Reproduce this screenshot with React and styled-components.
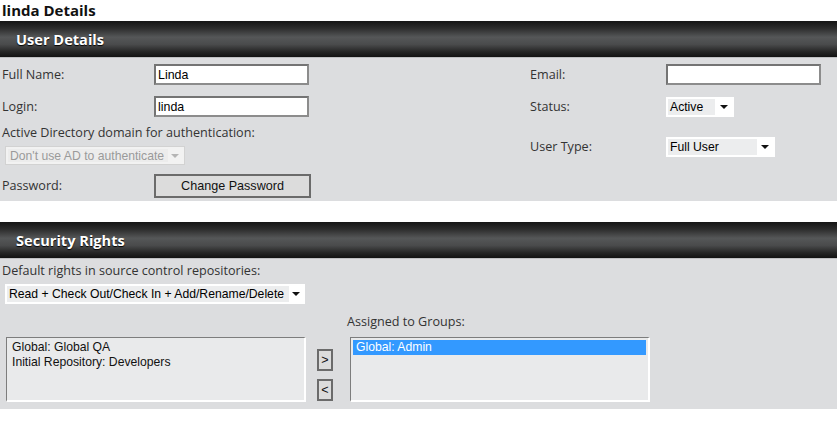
import React from 'react';
import styled, { createGlobalStyle } from 'styled-components';

/* global */

const GlobalStyle = createGlobalStyle`
    body {
        margin: 0;
        background: #ffffff;
        font-family: "Open Sans", "DejaVu Sans", sans-serif;
        color: #333;
    }
`;

/* layout */

const Page = styled.div`
    width: 837px;
    height: 425px;
    overflow: hidden;
`;

const PageTitle = styled.h1`
    margin: 0;
    padding: 1px 0 0 2px;
    height: 20px;
    font-size: 15px;
    line-height: 19px;
    font-weight: 700;
    color: #111;
`;

const SectionHeader = styled.div`
    height: 36px;
    display: flex;
    align-items: center;
    padding-left: 16px;
    background: linear-gradient(#151515 0%, #2c2c2c 20%, #555758 45%, #4a4b4c 65%, #262626 85%, #121212 100%);
    border-bottom: 1px solid #bfc0c2;
    color: #fff;
    font-size: 14.6px;
    font-weight: 700;
    text-shadow: 0 1px 1px #000;
`;

const Panel = styled.div`
    background: #dcdddf;
    padding: ${props => props.pad || '0'};
`;

const Gap = styled.div`
    height: ${props => props.h}px;
`;

const TwoCols = styled.div`
    display: flex;
`;

const Column = styled.div`
    display: flex;
    flex-direction: column;
    width: ${props => props.w}px;
    padding-top: 6px;
`;

const Row = styled.div`
    display: flex;
    align-items: center;
    height: ${props => props.h || 21}px;
    margin-top: ${props => props.mt || 0}px;
    margin-left: ${props => props.ml || 0}px;
`;

const Label = styled.span`
    display: block;
    width: ${props => props.w ? props.w + 'px' : 'auto'};
    flex-shrink: 0;
    font-size: 12.6px;
    line-height: 16px;
    color: #333;
    margin-top: ${props => props.mt || 0}px;
    margin-left: ${props => props.ml || 0}px;
`;

/* controls */

const TextInput = styled.input`
    box-sizing: border-box;
    width: ${props => props.w}px;
    height: 21px;
    border: 2px solid #747474;
    border-bottom-color: #8c8c8c;
    border-right-color: #8c8c8c;
    background: #fff;
    padding: 0 2px;
    font-family: "Liberation Sans", Arial, sans-serif;
    font-size: 12.4px;
    color: #000;
    outline: none;
`;

const PushButton = styled.button`
    box-sizing: border-box;
    width: ${props => props.w}px;
    height: ${props => props.h}px;
    padding: 0;
    border: 2px solid #6b6b6b;
    background: #dcdcdc;
    font-family: "Liberation Sans", Arial, sans-serif;
    font-size: 12.6px;
    color: #111;
    display: flex;
    align-items: center;
    justify-content: center;
`;

const SelectBox = styled.div`
    box-sizing: border-box;
    display: flex;
    align-items: stretch;
    width: ${props => props.w}px;
    height: ${props => props.h || 20}px;
    padding: 2px;
    background: ${props => (props.disabled ? '#f2f2f2' : '#fff')};
    border: ${props => (props.disabled ? '1px solid #d2d2d2' : '0')};
    margin-top: ${props => props.mt || 0}px;
    margin-left: ${props => props.ml || 0}px;
    font-family: "Liberation Sans", Arial, sans-serif;
    font-size: 12.2px;
`;

const SelectValue = styled.span`
    display: flex;
    align-items: center;
    width: ${props => props.vw}px;
    padding-left: 2px;
    background: ${props => (props.disabled ? '#ececec' : '#ecedee')};
    color: ${props => (props.disabled ? '#9a9a9a' : '#000')};
    white-space: nowrap;
    overflow: hidden;
`;

const SelectArrow = styled.span`
    flex: 1;
    display: flex;
    align-items: center;
    justify-content: center;
    &::after {
        content: '';
        border-left: 4px solid transparent;
        border-right: 4px solid transparent;
        border-top: 4px solid ${props => (props.disabled ? '#b5b5b5' : '#111')};
    }
`;

function Select({ value, w, vw, h, mt, ml, disabled }) {
    return (
        <SelectBox w={w} h={h} mt={mt} ml={ml} disabled={disabled}>
            <SelectValue vw={vw} disabled={disabled}>{value}</SelectValue>
            <SelectArrow disabled={disabled} />
        </SelectBox>
    );
}

/* security rights */

const ListsRow = styled.div`
    display: flex;
    align-items: flex-end;
    margin-top: 10px;
`;

const ListBox = styled.div`
    box-sizing: border-box;
    width: ${props => props.w}px;
    height: 65px;
    margin-left: ${props => props.ml || 0}px;
    margin-top: ${props => props.mt || 0}px;
    border-top: 1px solid #7d7d7d;
    border-left: 1px solid #7d7d7d;
    border-right: 2px solid #fff;
    border-bottom: 2px solid #fff;
    background: #e9eaeb;
    padding: 2px;
    font-family: "Liberation Sans", Arial, sans-serif;
    font-size: 12.2px;
`;

const ListItem = styled.div`
    height: 15px;
    line-height: 15px;
    padding-left: 3px;
    background: ${props => (props.selected ? '#3399ff' : 'transparent')};
    color: ${props => (props.selected ? '#fff' : '#111')};
`;

const MoveButtons = styled.div`
    display: flex;
    flex-direction: column;
    gap: 8px;
    margin-left: 11px;
    margin-bottom: 1px;
`;

const AssignedCol = styled.div`
    display: flex;
    flex-direction: column;
    margin-left: 14px;
`;

export default function App() {
    return (
        <Page>
            <GlobalStyle />
            <PageTitle>linda Details</PageTitle>

            <SectionHeader>User Details</SectionHeader>
            <Panel pad="0 0 3px 0">
                <TwoCols>
                    <Column w={528}>
                        <Row ml={2}>
                            <Label w={152}>Full Name:</Label>
                            <TextInput w={155} defaultValue="Linda" />
                        </Row>
                        <Row ml={2} mt={11}>
                            <Label w={152}>Login:</Label>
                            <TextInput w={155} defaultValue="linda" />
                        </Row>
                        <Label ml={2} mt={8}>Active Directory domain for authentication:</Label>
                        <Select value="Don't use AD to authenticate" w={180} vw={158} h={19} mt={5} ml={5} disabled />
                        <Row ml={2} mt={9} h={24}>
                            <Label w={152}>Password:</Label>
                            <PushButton w={157} h={24}>Change Password</PushButton>
                        </Row>
                    </Column>
                    <Column w={300}>
                        <Row ml={2}>
                            <Label w={136}>Email:</Label>
                            <TextInput w={155} />
                        </Row>
                        <Row ml={2} mt={12} h={20}>
                            <Label w={136}>Status:</Label>
                            <Select value="Active" w={68} vw={45} />
                        </Row>
                        <Row ml={2} mt={20} h={20}>
                            <Label w={136}>User Type:</Label>
                            <Select value="Full User" w={109} vw={87} />
                        </Row>
                    </Column>
                </TwoCols>
            </Panel>

            <Gap h={21} />

            <SectionHeader>Security Rights</SectionHeader>
            <Panel pad="4px 0 7px 0">
                <Label ml={2}>Default rights in source control repositories:</Label>
                <Select value="Read + Check Out/Check In + Add/Rename/Delete" w={300} vw={280} mt={5} ml={5} />
                <ListsRow>
                    <ListBox w={300} ml={6}>
                        <ListItem>Global: Global QA</ListItem>
                        <ListItem>Initial Repository: Developers</ListItem>
                    </ListBox>
                    <MoveButtons>
                        <PushButton w={16} h={22}>&gt;</PushButton>
                        <PushButton w={16} h={22}>&lt;</PushButton>
                    </MoveButtons>
                    <AssignedCol>
                        <Label>Assigned to Groups:</Label>
                        <ListBox w={300} ml={3} mt={7}>
                            <ListItem selected>Global: Admin</ListItem>
                        </ListBox>
                    </AssignedCol>
                </ListsRow>
            </Panel>
        </Page>
    );
}
